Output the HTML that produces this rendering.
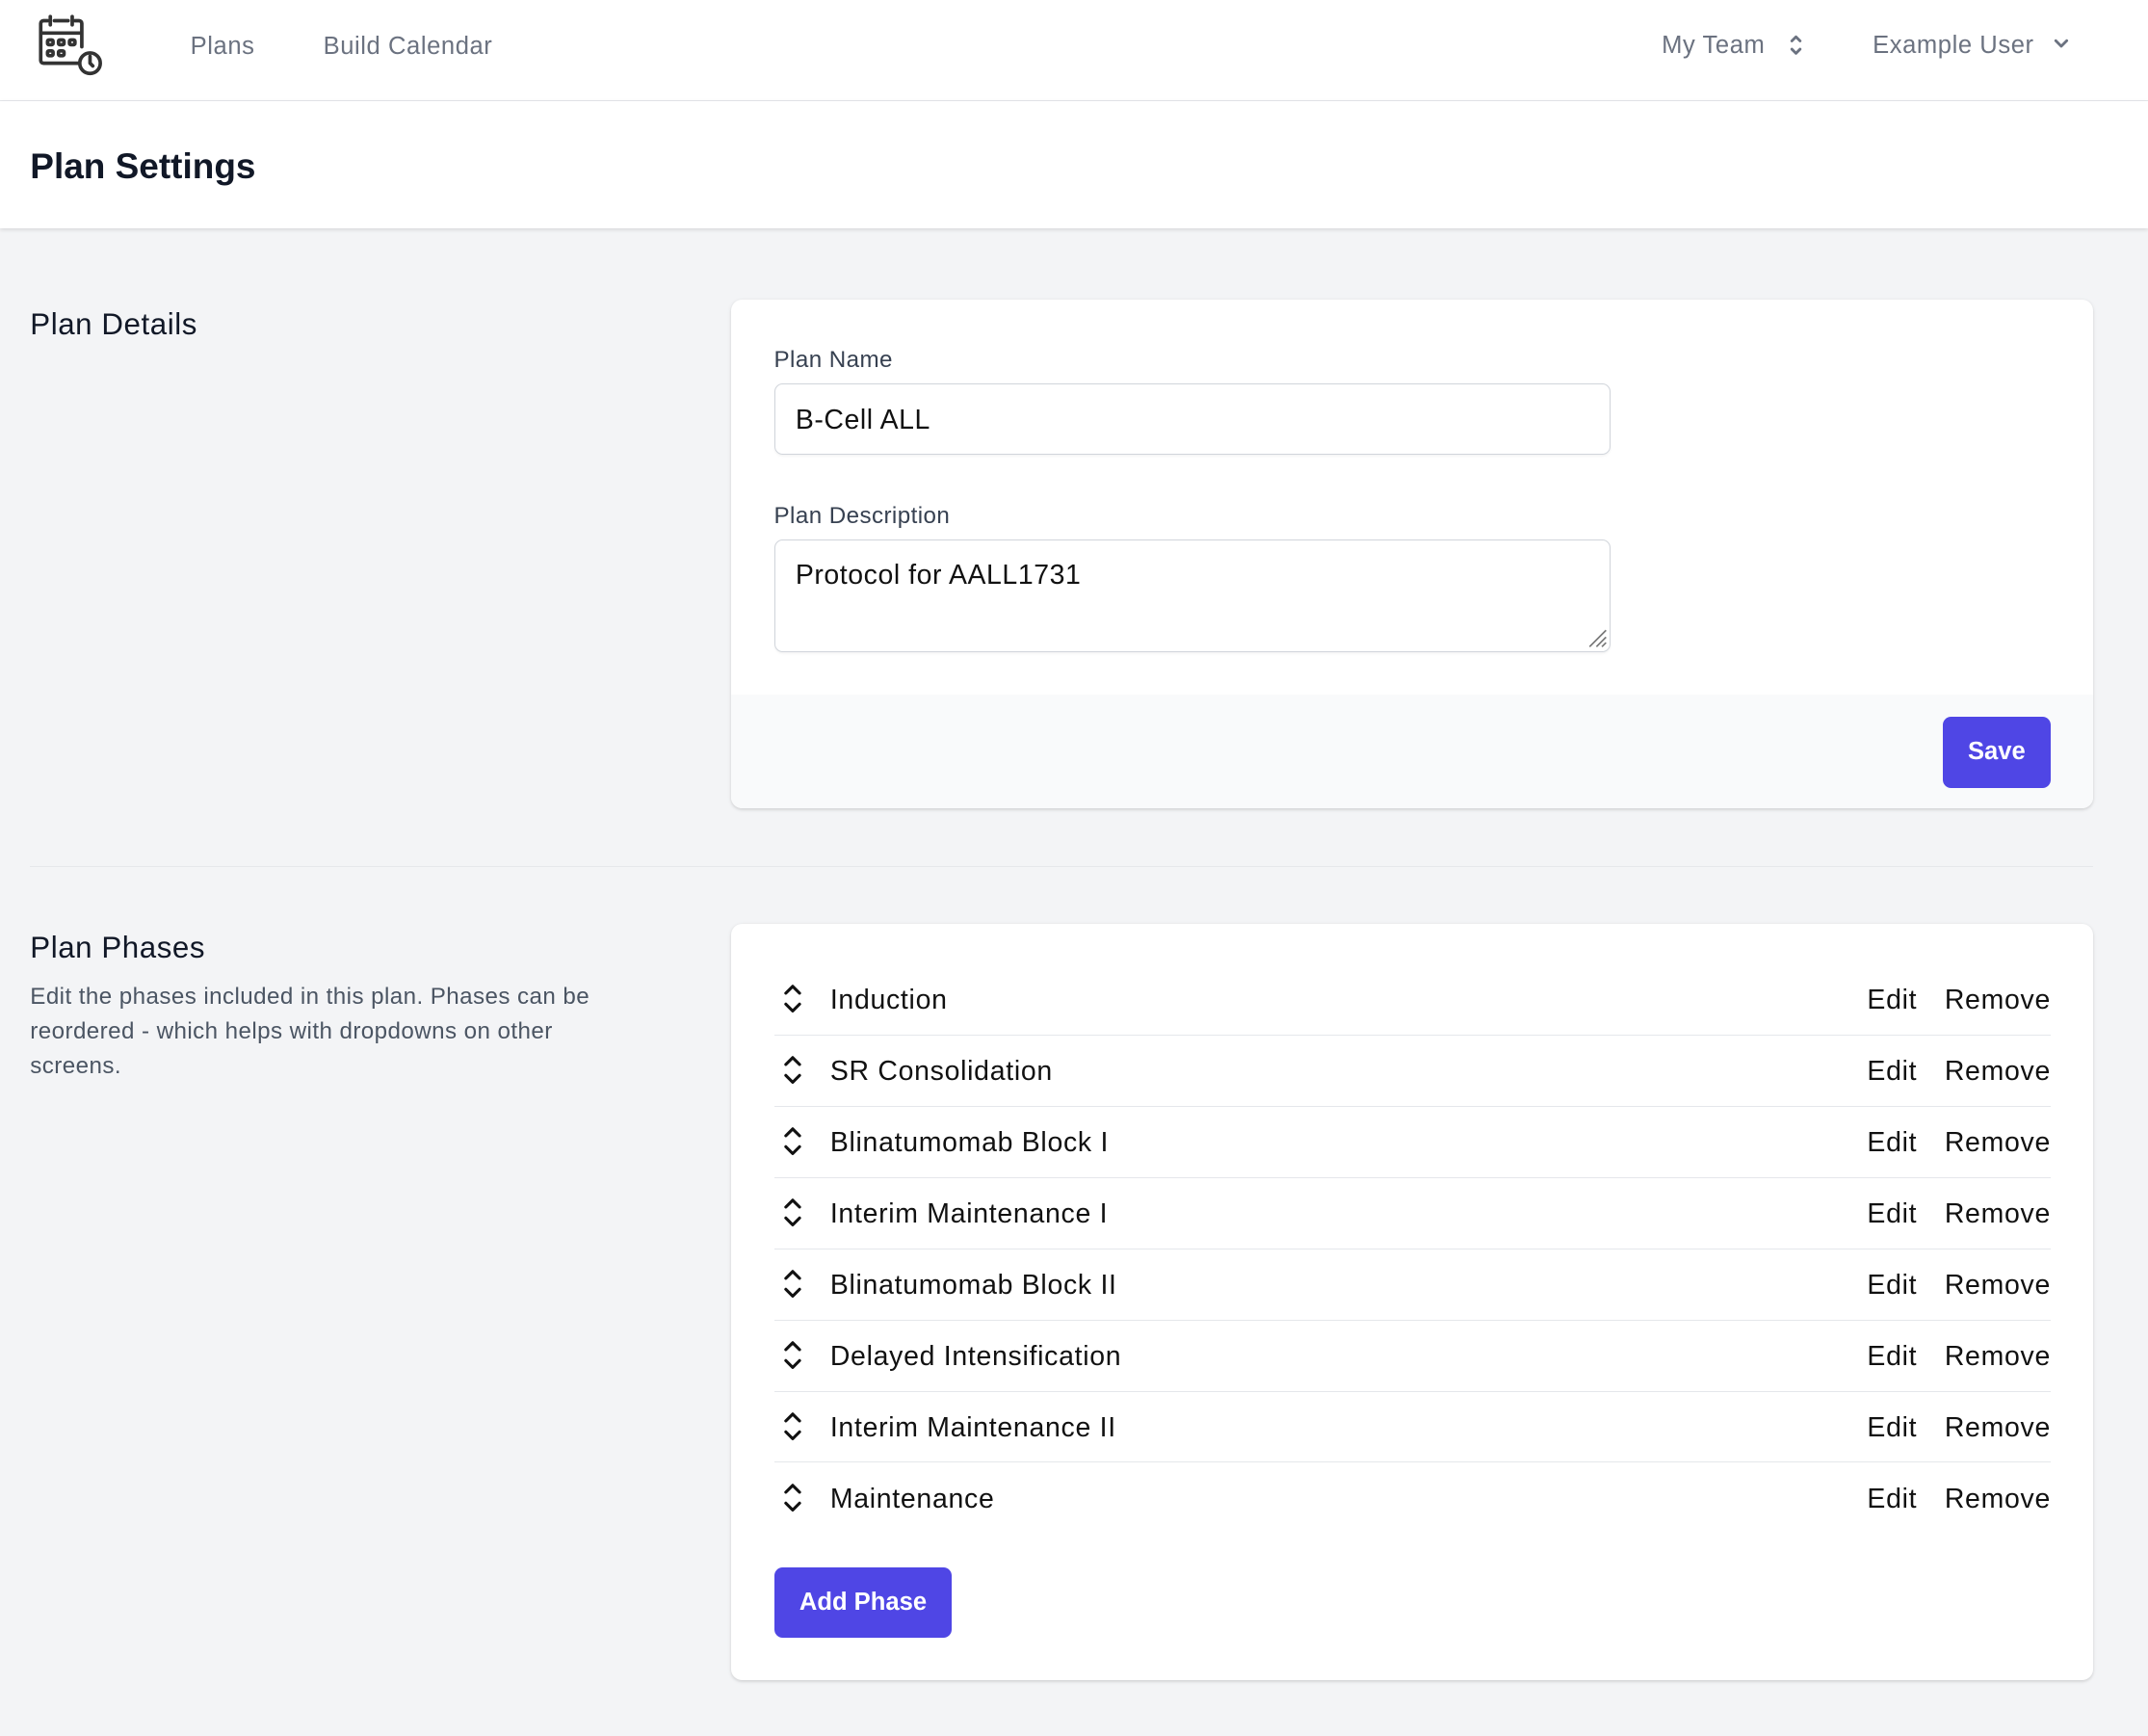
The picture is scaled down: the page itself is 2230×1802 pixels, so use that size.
<!DOCTYPE html>
<html><head><meta charset="utf-8"><style>
html,body{margin:0;padding:0}
body{width:1568px;height:1267px;zoom:1.42219;background:#f3f4f6;font-family:"Liberation Sans",sans-serif;position:relative;overflow:hidden}
.a{position:absolute;white-space:nowrap}
.nav{position:absolute;left:0;top:0;width:1568px;height:73px;background:#fff;border-bottom:1px solid #e5e7eb}
.hdr{position:absolute;left:0;top:74px;width:1568px;height:93px;background:#fff;box-shadow:0 1px 3px rgba(0,0,0,.12)}
.navt{font-size:18px;color:#6b7280;line-height:20px;letter-spacing:0.4px}
.card{position:absolute;left:534px;width:994px;background:#fff;border-radius:8px;box-shadow:0 1px 3px rgba(0,0,0,.1),0 1px 2px rgba(0,0,0,.06);overflow:hidden}
.lbl{font-size:17px;color:#374151;line-height:20px;letter-spacing:0.3px}
.inp{position:absolute;left:31px;width:611px;border:1px solid #d1d5db;border-radius:6px;box-shadow:0 1px 2px rgba(0,0,0,.05);font-size:20px;color:#111;box-sizing:border-box;letter-spacing:0.4px}
.btn{position:absolute;background:#4f46e5;color:#fff;font-weight:bold;font-size:18px;border-radius:6px;text-align:center}
.row{position:absolute;left:31px;width:932px;height:52px;border-bottom:1px solid #e5e7eb}
.row span{position:absolute;font-size:20px;color:#111;line-height:24px;top:15px;letter-spacing:0.5px}
.row svg{position:absolute;left:7px;top:15px}
</style></head><body>
<div class="nav">
<svg class="a" style="left:27px;top:9px" width="50" height="48" viewBox="0 0 50 48" fill="none" stroke="#333" stroke-width="2.6" stroke-linecap="round" stroke-linejoin="round">
<path d="M30 37H5a2 2 0 0 1-2-2V8a2 2 0 0 1 2-2h3M13 6h10M28 6h3a2 2 0 0 1 2 2v17M3 15h30M10 3v6M26 3v6"/>
<rect x="8" y="20" width="4" height="3.5" rx="1"/><rect x="16" y="20" width="4" height="3.5" rx="1"/><rect x="24" y="20" width="4" height="3.5" rx="1"/>
<rect x="8" y="28" width="4" height="3.5" rx="1"/><rect x="16" y="28" width="4" height="3.5" rx="1"/>
<circle cx="39" cy="37" r="7.5"/><path d="M39 32v5l2 2"/>
</svg>
<div class="a navt" style="left:139px;top:24px">Plans</div>
<div class="a navt" style="left:236px;top:24px">Build Calendar</div>
<div class="a navt" style="left:1213px;top:23px">My Team</div>
<svg class="a" style="left:1305px;top:24px" width="12" height="18" viewBox="0 0 12 18" fill="none" stroke="#6b7280" stroke-width="2" stroke-linecap="round" stroke-linejoin="round"><path d="M3 6l3-3 3 3M3 12l3 3 3-3"/></svg>
<div class="a navt" style="left:1367px;top:23px">Example User</div>
<svg class="a" style="left:1498px;top:27px" width="14" height="10" viewBox="0 0 14 10" fill="none" stroke="#6b7280" stroke-width="2" stroke-linecap="round" stroke-linejoin="round"><path d="M3 3l4 4 4-4"/></svg>
</div>
<div class="hdr"><div class="a" style="left:22px;top:33px;font-size:26px;font-weight:bold;color:#111827;line-height:30px">Plan Settings</div></div>

<div class="a" style="left:22px;top:224px;font-size:22px;color:#111827;line-height:26px;letter-spacing:0.4px">Plan Details</div>
<div class="card" style="top:219px;height:371px">
<div class="a lbl" style="left:31px;top:34px">Plan Name</div>
<div class="inp" style="top:61px;height:52px;padding:14px 15px;line-height:24px">B-Cell ALL</div>
<div class="a lbl" style="left:31px;top:148px">Plan Description</div>
<div class="inp" style="top:175px;height:82px;padding:13px 15px;line-height:24px">Protocol for AALL1731
<svg style="position:absolute;right:2px;bottom:2px" width="16" height="16" viewBox="0 0 16 16" stroke="#777" stroke-width="1.2"><path d="M15 3L3 15M15 8L8 15M15 12L12 15"/></svg></div>
<div class="a" style="left:0;top:288px;width:994px;height:83px;background:#f9fafb"></div>
<div class="btn" style="left:884px;top:304px;width:79px;height:52px;line-height:52px">Save</div>
</div>

<div class="a" style="left:22px;top:632px;width:1506px;height:1px;background:#e5e7eb"></div>

<div class="a" style="left:22px;top:679px;font-size:22px;color:#111827;line-height:26px;letter-spacing:0.4px">Plan Phases</div>
<div class="a" style="left:22px;top:715px;width:445px;white-space:normal;font-size:17px;color:#4b5563;line-height:25.5px;letter-spacing:0.3px">Edit the phases included in this plan. Phases can be reordered - which helps with dropdowns on other screens.</div>

<div class="card" style="top:674px;height:552px">
<div class="row" style="top:29px"><svg width="14" height="22" viewBox="0 0 14 22" fill="none" stroke="#111" stroke-width="2.2" stroke-linecap="round" stroke-linejoin="round"><path d="M2 7l5-5 5 5M2 15l5 5 5-5"/></svg><span style="left:41px">Induction</span><span style="left:798px">Edit</span><span style="right:0">Remove</span></div>
<div class="row" style="top:81px"><svg width="14" height="22" viewBox="0 0 14 22" fill="none" stroke="#111" stroke-width="2.2" stroke-linecap="round" stroke-linejoin="round"><path d="M2 7l5-5 5 5M2 15l5 5 5-5"/></svg><span style="left:41px">SR Consolidation</span><span style="left:798px">Edit</span><span style="right:0">Remove</span></div>
<div class="row" style="top:133px"><svg width="14" height="22" viewBox="0 0 14 22" fill="none" stroke="#111" stroke-width="2.2" stroke-linecap="round" stroke-linejoin="round"><path d="M2 7l5-5 5 5M2 15l5 5 5-5"/></svg><span style="left:41px">Blinatumomab Block I</span><span style="left:798px">Edit</span><span style="right:0">Remove</span></div>
<div class="row" style="top:185px"><svg width="14" height="22" viewBox="0 0 14 22" fill="none" stroke="#111" stroke-width="2.2" stroke-linecap="round" stroke-linejoin="round"><path d="M2 7l5-5 5 5M2 15l5 5 5-5"/></svg><span style="left:41px">Interim Maintenance I</span><span style="left:798px">Edit</span><span style="right:0">Remove</span></div>
<div class="row" style="top:237px"><svg width="14" height="22" viewBox="0 0 14 22" fill="none" stroke="#111" stroke-width="2.2" stroke-linecap="round" stroke-linejoin="round"><path d="M2 7l5-5 5 5M2 15l5 5 5-5"/></svg><span style="left:41px">Blinatumomab Block II</span><span style="left:798px">Edit</span><span style="right:0">Remove</span></div>
<div class="row" style="top:289px"><svg width="14" height="22" viewBox="0 0 14 22" fill="none" stroke="#111" stroke-width="2.2" stroke-linecap="round" stroke-linejoin="round"><path d="M2 7l5-5 5 5M2 15l5 5 5-5"/></svg><span style="left:41px">Delayed Intensification</span><span style="left:798px">Edit</span><span style="right:0">Remove</span></div>
<div class="row" style="top:341px"><svg width="14" height="22" viewBox="0 0 14 22" fill="none" stroke="#111" stroke-width="2.2" stroke-linecap="round" stroke-linejoin="round"><path d="M2 7l5-5 5 5M2 15l5 5 5-5"/></svg><span style="left:41px">Interim Maintenance II</span><span style="left:798px">Edit</span><span style="right:0">Remove</span></div>
<div class="row" style="top:393px;border-bottom:none"><svg width="14" height="22" viewBox="0 0 14 22" fill="none" stroke="#111" stroke-width="2.2" stroke-linecap="round" stroke-linejoin="round"><path d="M2 7l5-5 5 5M2 15l5 5 5-5"/></svg><span style="left:41px">Maintenance</span><span style="left:798px">Edit</span><span style="right:0">Remove</span></div>
<div class="btn" style="left:31px;top:470px;width:130px;height:51px;line-height:51px">Add Phase</div>
</div>
</body></html>
